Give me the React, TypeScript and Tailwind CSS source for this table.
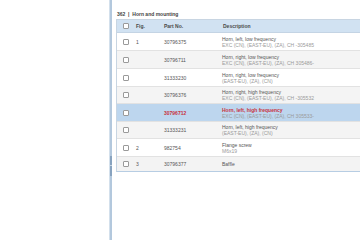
import React from "react";

type Row = {
  fig: string;
  part: string;
  l1: string;
  l2?: string;
  h: string;
  bg: string;
  sel?: boolean;
};

const rows: Row[] = [
  { fig: "1", part: "30796375", l1: "Horn, left, low frequency", l2: "EXC (CN), (EAST-EU), (ZA), CH -305485", h: "h-[18px]", bg: "bg-white" },
  { fig: "", part: "30796711", l1: "Horn, right, low frequency", l2: "EXC (CN), (EAST-EU), (ZA), CH 305486-", h: "h-[18px]", bg: "bg-[#f4f4f4]" },
  { fig: "", part: "31333230", l1: "Horn, right, low frequency", l2: "(EAST-EU), (ZA), (CN)", h: "h-[18px]", bg: "bg-white" },
  { fig: "", part: "30796376", l1: "Horn, right, high frequency", l2: "EXC (CN), (EAST-EU), (ZA), CH -305532", h: "h-[17px]", bg: "bg-[#f4f4f4]" },
  { fig: "", part: "30796712", l1: "Horn, left, high frequency", l2: "EXC (CN), (EAST-EU), (ZA), CH 305533-", h: "h-[18px]", bg: "bg-[#bdd6ee]", sel: true },
  { fig: "", part: "31333231", l1: "Horn, left, high frequency", l2: "(EAST-EU), (ZA), (CN)", h: "h-[17px]", bg: "bg-[#f4f4f4]" },
  { fig: "2", part: "982754", l1: "Flange screw", l2: "M6x19", h: "h-[18px]", bg: "bg-white" },
  { fig: "3", part: "30796377", l1: "Baffle", h: "h-[14px]", bg: "bg-[#f3f3f3]" },
];

function Box() {
  return <div className="w-[6px] h-[6px] border border-[#9a9a9a] bg-white rounded-[1px]" />;
}

export default function App() {
  return (
    <div
      className="w-[360px] h-[240px] overflow-hidden bg-white flex"
      style={{ fontFamily: '"Liberation Sans", Arial, sans-serif' }}
    >
      <div className="w-[109px] shrink-0 bg-white" />
      <div className="w-[3px] shrink-0 flex flex-col bg-[#b3c8dd] border-l border-[#d3e0ec]">
        <div className="h-[156px]" />
        <div className="h-[20px] bg-[#88a3bf] flex flex-col">
          <div className="h-[9px]" />
          <div className="h-[1px] bg-[#c9d7e5]" />
        </div>
      </div>
      <div className="flex-1 pl-[4px] flex flex-col">
        <div className="h-[11px]" />
        <div className="h-[6px] leading-[6px] text-[5px] font-bold text-[#444] pl-[1px] whitespace-nowrap">
          362&nbsp;&nbsp;|&nbsp;&nbsp;Horn and mounting
        </div>
        <div className="h-[2px]" />
        <div className="w-[320px] border-t border-l border-[#c8d5e2] border-b border-b-[#b7cde3]">
          <div className="h-[13px] bg-[#d1e2f2] flex items-center text-[5px] leading-[6px] font-bold text-[#4a4a4a] border-b border-[#c4d4e4]">
            <div className="w-[19px] pl-[6px] flex items-center"><Box /></div>
            <div className="w-[28px]">Fig.</div>
            <div className="w-[58px]">Part No.</div>
            <div className="flex-1 pl-[1px]">Description</div>
          </div>
          {rows.map((r, i) => (
            <div
              key={i}
              className={`${r.h} ${r.bg} flex items-center text-[5px] leading-[6px] ${i < rows.length - 1 ? "border-b border-[#e2e2e2]" : ""}`}
            >
              <div className="w-[19px] pl-[6px] flex items-center"><Box /></div>
              <div className="w-[28px] text-[#555]">{r.fig}</div>
              <div className={`w-[58px] ${r.sel ? "text-[#c8323c] font-bold" : "text-[#555]"}`}>{r.part}</div>
              <div className="flex-1 flex flex-col whitespace-nowrap">
                <div className={r.sel ? "text-[#c8323c] font-bold" : "text-[#555]"}>{r.l1}</div>
                {r.l2 && <div className="text-[#9a9a9a]">{r.l2}</div>}
              </div>
            </div>
          ))}
        </div>
      </div>
    </div>
  );
}
